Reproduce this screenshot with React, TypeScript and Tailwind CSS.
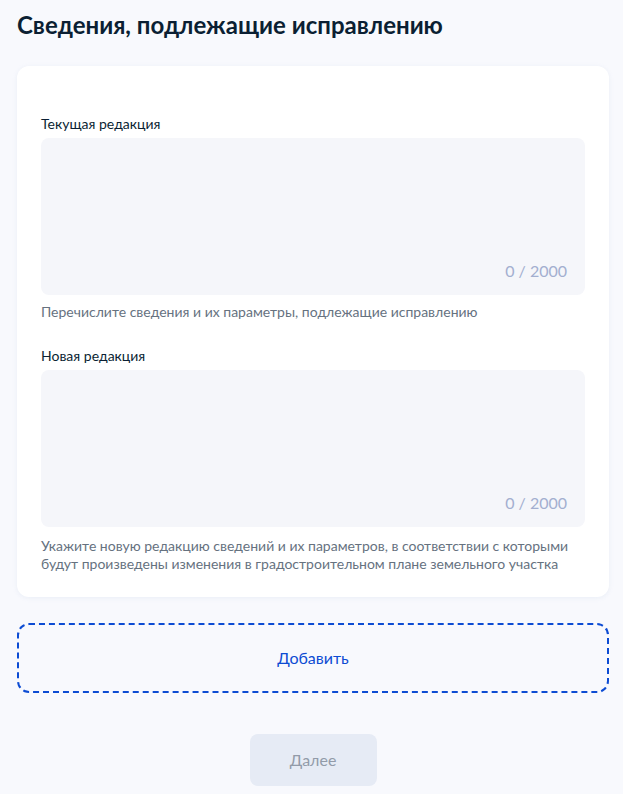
import React from "react";

function Field({ label, helper, helperMt }: { label: string; helper: React.ReactNode; helperMt: string }) {
  return (
    <div className="flex flex-col">
      <div className="text-[14px] leading-[20px] text-[#0b1f33]">{label}</div>
      <div className="mt-[4px] h-[157px] rounded-[8px] bg-[#f5f6fa] relative">
        <div className="absolute right-[18px] bottom-[12px] text-[16px] leading-[24px] text-[#a3afd0]">0 / 2000</div>
      </div>
      <div className={helperMt + " text-[14px] leading-[18px] text-[#66727f]"}>{helper}</div>
    </div>
  );
}

export default function App() {
  return (
    <div className="min-h-[794px] w-[623px] bg-[#f8f9fd] pl-[17px] pr-[14px] pt-[9px] pb-[8px]" style={{ fontFamily: "Lato, 'Noto Sans', sans-serif" }}>
      <h1 className="text-[24px] leading-[32px] font-bold text-[#0b1f33]">Сведения, подлежащие исправлению</h1>
      <div className="mt-[25px] rounded-[12px] bg-white shadow-[0_1px_4px_rgba(230,235,245,0.8)] px-[24px] pt-[48px] pb-[24px] flex flex-col gap-[25px]">
        <Field label="Текущая редакция" helper="Перечислите сведения и их параметры, подлежащие исправлению" helperMt="mt-[8px]" />
        <Field
          label="Новая редакция"
          helper={<>Укажите новую редакцию сведений и их параметров, в соответствии с которыми будут произведены изменения в градостроительном плане земельного участка</>}
          helperMt="mt-[10px]"
        />
      </div>
      <button className="mt-[26px] w-full h-[70px] rounded-[12px] border-2 border-dashed border-[#0d4cd3] text-[16px] text-[#0d4cd3]">
        Добавить
      </button>
      <div className="mt-[41px] flex justify-center">
        <button className="w-[127px] h-[52px] rounded-[8px] bg-[#e6ebf5] text-[16px] text-[#929ba9]">Далее</button>
      </div>
    </div>
  );
}
